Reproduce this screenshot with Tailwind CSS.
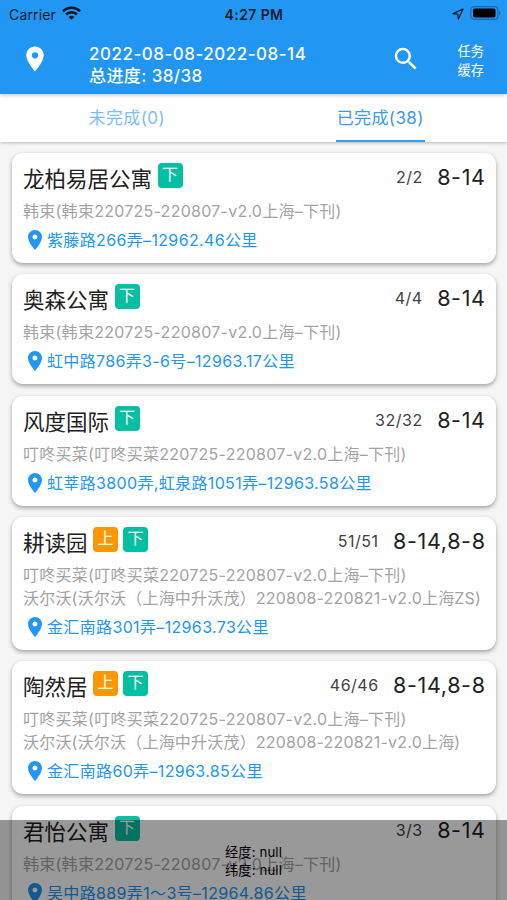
<!DOCTYPE html>
<html lang="zh-CN">
<head>
<meta charset="utf-8">
<title>任务</title>
<script src="https://cdn.jsdelivr.net/npm/@tailwindcss/browser@4"></script>
</head>
<body class="font-[Inter,'Noto_Sans_CJK_SC',sans-serif] bg-[#f5f5f5]">
<div class="relative flex h-[900px] w-[507px] flex-col overflow-hidden bg-[#f5f5f5] whitespace-nowrap">
  <header class="z-10 h-[94px] shrink-0 bg-[#2196f3] shadow-[0_1px_4px_rgba(0,0,0,0.25)]">
    <div class="grid h-7 grid-cols-3 items-center pr-[6px] pl-[9px] text-[14px] text-[#0b1c2b]">
      <div class="flex items-center gap-[6px]"><span class="tracking-[0.15px]">Carrier</span>
        <svg class="-mt-[3px] h-[14px] w-[19px]" viewBox="0 0 19 14" fill="none" stroke="#06121d" stroke-width="2.6"><path d="M1 5.3C5.7.5 13.3.5 18 5.3M4.1 8.5c3-3 7.8-3 10.8 0"/><path d="M9.500 13.700 6.700 10.900c1.600-1.500 4-1.500 5.600 0z" fill="#06121d" stroke="none"/></svg>
      </div>
      <div class="-ml-[2px] text-center font-semibold tracking-[0.4px]">4:27 PM</div>
      <div class="flex items-center justify-end gap-[6px]">
        <svg class="h-3 w-3" viewBox="0 0 12 12" fill="none" stroke="#0b1c2b" stroke-width="1.300" stroke-linejoin="round"><path d="M11 1 1 5.700l4.800.5L6.400 11z"/></svg>
        <svg class="-mt-[2px] h-[14px] w-[31px]" viewBox="0 0 31 14"><rect x=".8" y=".6" width="27" height="12.800" rx="3.500" fill="none" stroke="#176aad" stroke-width="1.100"/><rect x="3" y="2.500" width="22.500" height="9" rx="1.800" fill="#000"/><path d="M29 4.800c1.800.8 1.800 3.600 0 4.400z" fill="#176aad"/></svg>
      </div>
    </div>
    <div class="flex h-[66px] items-start text-white">
      <svg class="mt-[16px] ml-5 size-[30px] shrink-0" viewBox="0 0 24 24" fill="currentColor"><path d="M12 2C8.130 2 5 5.130 5 9c0 5.250 7 13 7 13s7-7.750 7-13c0-3.870-3.130-7-7-7zm0 9.500a2.500 2.500 0 1 1 0-5 2.500 2.500 0 0 1 0 5z"/></svg>
      <div class="mt-[15px] ml-[39px] w-[302px] text-[17px] leading-[22px] font-medium">
        <div class="tracking-[0.5px]">2022-08-08-2022-08-14</div>
        <div class="tracking-[0.4px]">总进度: 38/38</div>
      </div>
      <svg class="mt-4 size-[30px] shrink-0" viewBox="0 0 24 24" fill="currentColor"><path d="M15.500 14h-.79l-.28-.27A6.471 6.471 0 0 0 16 9.500 6.500 6.500 0 1 0 9.500 16c1.610 0 3.090-.59 4.230-1.570l.27.28v.79l5 4.990L20.490 19l-4.990-5zm-6 0C7.010 14 5 11.990 5 9.500S7.010 5 9.500 5 14 7.010 14 9.500 11.990 14 9.500 14z"/></svg>
      <div class="mt-[14px] ml-[36.500px] text-[13.200px] leading-[18.500px]"><div>任务</div><div>缓存</div></div>
    </div>
  </header>
  <nav class="grid h-12 shrink-0 grid-cols-2 bg-white text-[17px] tracking-[0.4px] shadow-[0_1px_3px_rgba(0,0,0,0.25)]">
    <div class="flex justify-center pt-[12px] leading-[24px] text-[#7cbdf5]"><span>未完成(0)</span></div>
    <div class="flex justify-center"><div class="flex w-[89px] justify-center border-b-[2.500px] border-[#3b9be8] pt-[12px] leading-[24px] text-[#3b9be8]"><span>已完成(38)</span></div></div>
  </nav>
  <main id="list" class="flex flex-col gap-[11.200px] pr-[11px] pl-[12px] pt-[11px]"></main>
  <div class="absolute inset-x-0 bottom-0 z-20 flex h-[80px] flex-col items-center bg-black/40 pt-[23px] text-[13.200px] leading-[18px] tracking-[0.15px] text-black">
    <div>经度: null</div><div>纬度: null</div>
  </div>
</div>
<script>
// Each entry: title, tags, count, dates, campaign lines, address
const items = [
  ['龙柏易居公寓','下','2/2','8-14',['韩束(韩束220725-220807-v2.0上海–下刊)'],'紫藤路266弄–12962.46公里'],
  ['奥森公寓','下','4/4','8-14',['韩束(韩束220725-220807-v2.0上海–下刊)'],'虹中路786弄3-6号–12963.17公里'],
  ['风度国际','下','32/32','8-14',['叮咚买菜(叮咚买菜220725-220807-v2.0上海–下刊)'],'虹莘路3800弄,虹泉路1051弄–12963.58公里'],
  ['耕读园','上下','51/51','8-14,8-8',['叮咚买菜(叮咚买菜220725-220807-v2.0上海–下刊)','沃尔沃(沃尔沃（上海中升沃茂）220808-220821-v2.0上海ZS)'],'金汇南路301弄–12963.73公里'],
  ['陶然居','上下','46/46','8-14,8-8',['叮咚买菜(叮咚买菜220725-220807-v2.0上海–下刊)','沃尔沃(沃尔沃（上海中升沃茂）220808-220821-v2.0上海)'],'金汇南路60弄–12963.85公里'],
  ['君怡公寓','下','3/3','8-14',['韩束(韩束220725-220807-v2.0上海–下刊)'],'吴中路889弄1～3号–12964.86公里'],
];
const tag = t => `<span class="flex size-[25px] justify-center rounded-[4px] text-[16px] leading-[23px] text-white ${t === '上' ? 'bg-[#ff9800]' : 'bg-[#05bfa3]'}">${t}</span>`;
document.getElementById('list').innerHTML = items.map(([name, tags, n, d, lines, addr]) => `
<section class="shrink-0 rounded-[11px] bg-white pt-[10px] pr-[11px] pb-[11px] pl-[11px] shadow-[0_2px_4px_rgba(0,0,0,0.35)]">
  <div class="flex h-[36px] items-start text-[#212121]">
    <h2 class="text-[21.500px] leading-[33px]">${name}</h2>
    <div class="ml-[5.500px] flex gap-[5px]">${[...tags].map(tag).join('')}</div>
    <div class="-mr-[0.600px] ml-auto flex items-center gap-[14.500px] leading-[28px]"><span class="text-[16px] tracking-[0.5px] text-[#424242]">${n}</span><span class="text-[21.500px] tracking-[0.650px]">${d}</span></div>
  </div>
  ${lines.map((t, i) => `<p class="h-[23.100px] text-[16px] leading-[24px] text-[#a3a3a3] ${i ? 'tracking-[0.2px]' : 'tracking-[0.260px]'}">${t}</p>`).join('')}
  <div class="mt-[6px] flex h-6 items-center text-[16px] tracking-[0.350px] text-[#2196f3]">
    <svg class="size-6 shrink-0" viewBox="0 0 24 24" fill="currentColor"><path d="M12 2C8.130 2 5 5.130 5 9c0 5.250 7 13 7 13s7-7.750 7-13c0-3.870-3.130-7-7-7zm0 9.500a2.500 2.500 0 1 1 0-5 2.500 2.500 0 0 1 0 5z"/></svg>
    <span>${addr}</span>
  </div>
</section>`).join('');
</script>
</body>
</html>
